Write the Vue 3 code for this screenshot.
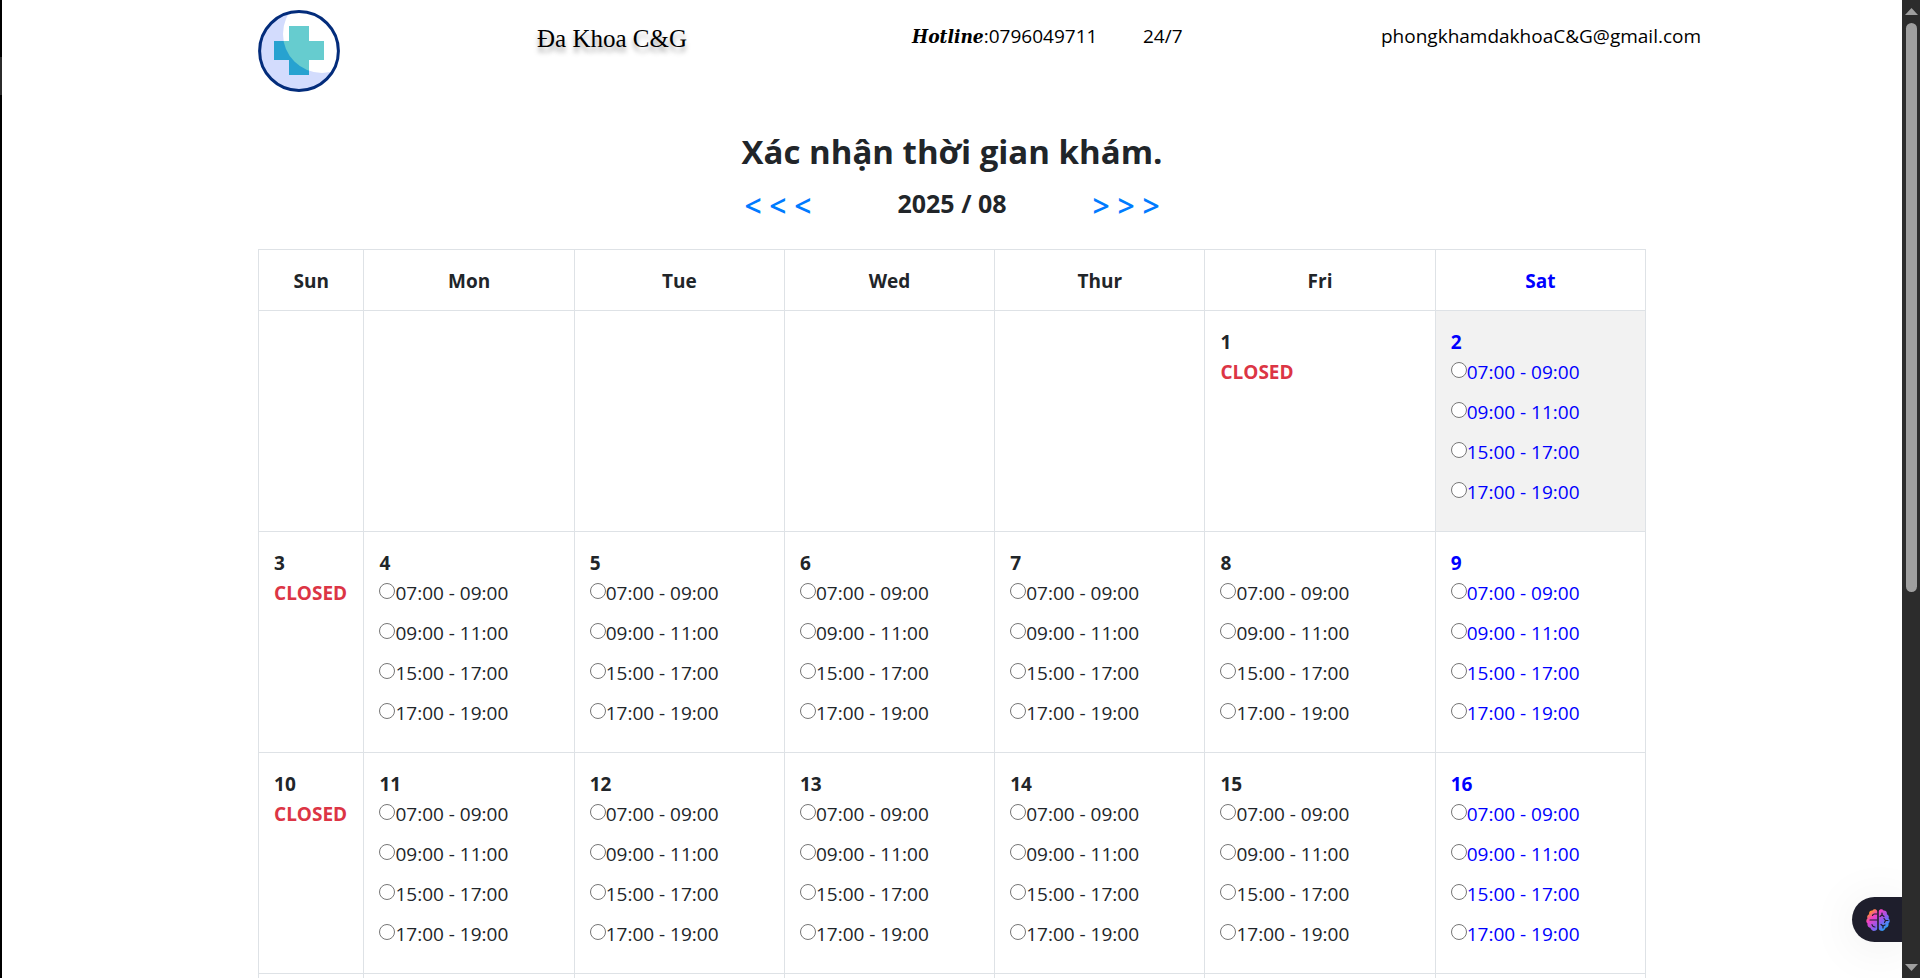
<script setup>
import { ref } from 'vue'

const weekdays = ['Sun', 'Mon', 'Tue', 'Wed', 'Thur', 'Fri', 'Sat']
const slots = ['07:00 - 09:00', '09:00 - 11:00', '15:00 - 17:00', '17:00 - 19:00']
const today = 2
const picked = ref('')

// August 2025 starts on a Friday
const weeks = [
  [null, null, null, null, null, 1, 2],
  [3, 4, 5, 6, 7, 8, 9],
  [10, 11, 12, 13, 14, 15, 16],
  [null, null, null, null, null, null, null],
]

const isClosed = (day, column) => column === 0 || day < today
</script>

<template>
  <div class="shell">
    <div class="edge" aria-hidden="true"></div>
    <div class="page">
      <header class="top">
        <a class="logo" href="#" aria-label="Đa Khoa C&amp;G">
          <svg viewBox="0 0 82 82" width="82" height="82" aria-hidden="true">
            <defs>
              <clipPath id="disc"><circle cx="41" cy="41" r="39" /></clipPath>
              <clipPath id="cross"><path d="M31 16h20v15h15v19H51v15H31V50H16V31h15z" /></clipPath>
            </defs>
            <circle cx="41" cy="41" r="39" fill="#d3dcfd" />
            <circle cx="64" cy="24" r="39" fill="#fff" clip-path="url(#disc)" />
            <g clip-path="url(#cross)">
              <rect width="82" height="82" fill="#27a2d0" />
              <circle cx="64" cy="24" r="39" fill="#66cccf" />
            </g>
            <circle cx="41" cy="41" r="39.4" fill="none" stroke="#032c7b" stroke-width="3" />
          </svg>
        </a>
        <span class="brand">Đa Khoa C&amp;G</span>
        <span class="contact"><b class="hot">Hotline</b>:0796049711</span>
        <span class="contact">24/7</span>
        <span class="contact">phongkhamdakhoaC&amp;G@gmail.com</span>
      </header>

      <main class="main">
        <h1>Xác nhận thời gian khám.</h1>
        <nav class="months">
          <a href="#" aria-label="Previous month">&lt; &lt; &lt;</a>
          <h2>2025 / 08</h2>
          <a href="#" aria-label="Next month">&gt; &gt; &gt;</a>
        </nav>

        <table class="calendar">
          <colgroup>
            <col class="c-sun" /><col /><col /><col /><col /><col class="c-fri" /><col />
          </colgroup>
          <thead>
            <tr>
              <th v-for="(name, i) in weekdays" :key="name" scope="col" :class="{ sat: i === 6 }">{{ name }}</th>
            </tr>
          </thead>
          <tbody>
            <tr v-for="(week, w) in weeks" :key="w">
              <td v-for="(day, i) in week" :key="i" :class="{ sat: i === 6, today: day === today }">
                <template v-if="day">
                  <strong class="day">{{ day }}</strong>
                  <strong v-if="isClosed(day, i)" class="closed">CLOSED</strong>
                  <template v-else>
                    <label v-for="slot in slots" :key="slot" class="slot">
                      <input v-model="picked" type="radio" name="slot" :value="day + ' ' + slot" />{{ slot }}
                    </label>
                  </template>
                </template>
              </td>
            </tr>
          </tbody>
        </table>
      </main>

      <button class="assistant" type="button" aria-label="Assistant">
        <svg viewBox="0 0 24 24" width="24" height="24" aria-hidden="true">
          <defs>
            <linearGradient id="brain" x1="0" y1="0" x2="1" y2="1">
              <stop offset="0.12" stop-color="#ff9a1f" />
              <stop offset="0.32" stop-color="#f23fc4" />
              <stop offset="0.6" stop-color="#8a5cf0" />
              <stop offset="0.85" stop-color="#2f9cf5" />
            </linearGradient>
          </defs>
          <path fill="url(#brain)" d="M11.2 3.2C10.6.9 7.600.7 6.500 2.500 4 2.300 2.600 4.300 3.200 6.300 1.200 7 .8 9 1.500 10.300-.1 11.600-.1 14.200 1.500 15.300 1 18 2.500 19.600 4.300 19.800 5 22 7 23.300 8.900 22.800 10.300 22.600 11.200 21.600 11.200 20.300zM12.800 3.200C13.400.9 16.400.7 17.500 2.500 20 2.300 21.400 4.300 20.800 6.300 22.800 7 23.200 9 22.500 10.300 24.100 11.600 24.100 14.200 22.500 15.300 23 18 21.500 19.600 19.700 19.800 19 22 17 23.300 15.100 22.800 13.700 22.600 12.800 21.600 12.800 20.300z" />
          <path fill="none" stroke="#1e1e2c" stroke-width="1.2" stroke-linecap="round" d="M11 6H8.500Q7 6 6.500 7.500M11 12H4M6 16.500Q6.500 19 9 19M16 5v2l2 1.500M16 7l-2 1.500M18 10.500l1.500 2h2.500M19.500 12.500l-1 2M15 16.500l2 1.500 2-1M17 18v2" />
        </svg>
      </button>
    </div>

    <div class="scroll" aria-hidden="true">
      <svg viewBox="0 0 13 7" width="13" height="7"><path d="M6.500 0L13 7H0z" fill="#9f9f9f" /></svg>
      <div class="track"><div class="thumb"></div></div>
      <svg viewBox="0 0 13 7" width="13" height="7"><path d="M6.500 7L13 0H0z" fill="#9f9f9f" /></svg>
    </div>
  </div>
</template>

<style>
body {
  margin: 0;
  background: #fff;
}
</style>

<style scoped>
* {
  box-sizing: border-box;
}
.shell {
  display: flex;
  height: 100vh;
  overflow: hidden;
  font-family: "Open Sans", "Noto Sans", sans-serif;
  font-size: 19px;
  line-height: 30px;
  color: #212529;
}
.edge {
  flex: 0 0 2px;
  background: linear-gradient(#000 57px, #2b2b2b 57px, #2b2b2b 95px, #000 95px);
}
.page {
  position: relative;
  flex: 1;
  min-width: 0;
  overflow: hidden;
}
.top,
.main {
  width: 73.05%;
  margin: 0 auto;
}
.top {
  display: grid;
  grid-template-columns: 279fr 375fr 231fr 238fr 265fr;
  height: 129px;
  padding-top: 10px;
  color: #000;
}
.logo {
  height: 82px;
}
.logo svg {
  display: block;
}
.brand {
  padding-top: 14px;
  font-family: "Liberation Serif", serif;
  font-size: 25px;
  text-shadow: 0 5px 5px rgba(0, 0, 0, 0.35);
}
.contact {
  min-width: 0;
  padding-top: 11px;
  white-space: nowrap;
}
.hot {
  font-family: "DejaVu Serif Condensed", "DejaVu Serif", serif;
  font-style: italic;
}
h1 {
  margin: 0;
  font-size: 33px;
  line-height: 46px;
  font-weight: 700;
  text-align: center;
}
.months {
  display: flex;
  justify-content: center;
  gap: 86px;
  height: 74px;
  padding-top: 8px;
}
.months a {
  padding-top: 5px;
  font-size: 30px;
  line-height: 36px;
  font-weight: 600;
  color: #007bff;
  text-decoration: none;
}
.months h2 {
  margin: 0;
  padding-top: 2px;
  font-size: 25px;
  line-height: 36px;
  font-weight: 700;
}
.calendar {
  width: 100%;
  table-layout: fixed;
  border-collapse: collapse;
}
.c-sun {
  width: 7.6%;
}
.c-fri {
  width: 16.6%;
}
th,
td {
  padding: 16px 15px 14px;
  border: 1px solid #dee2e6;
  text-align: left;
  vertical-align: top;
}
th {
  text-align: center;
}
td {
  height: 221px;
}
.sat {
  color: #00f;
}
.today {
  background: #f2f2f2;
}
.day,
.closed,
.slot {
  display: block;
}
.closed {
  color: #dc3545;
}
.slot {
  display: flex;
  align-items: flex-start;
  height: 40px;
  white-space: nowrap;
}
.slot input {
  width: 16px;
  height: 16px;
  margin: 5px 0 0;
}
.assistant {
  position: absolute;
  right: 0;
  bottom: 36px;
  display: flex;
  align-items: center;
  width: 50px;
  height: 45px;
  padding: 0 0 0 14px;
  border: 0;
  border-radius: 23px 0 0 23px;
  background: #1e1e2c;
  box-shadow: 0 5px 50px rgba(0, 0, 0, 0.08);
}
.scroll {
  flex: 0 0 18px;
  display: flex;
  flex-direction: column;
  align-items: center;
  gap: 8px;
  padding: 8px 0 7px;
  background: #2c2c2c;
}
.scroll svg {
  flex: none;
}
.track {
  flex: 1;
  width: 11px;
}
.thumb {
  height: 61%;
  border-radius: 6px;
  background: #9f9f9f;
}
</style>
